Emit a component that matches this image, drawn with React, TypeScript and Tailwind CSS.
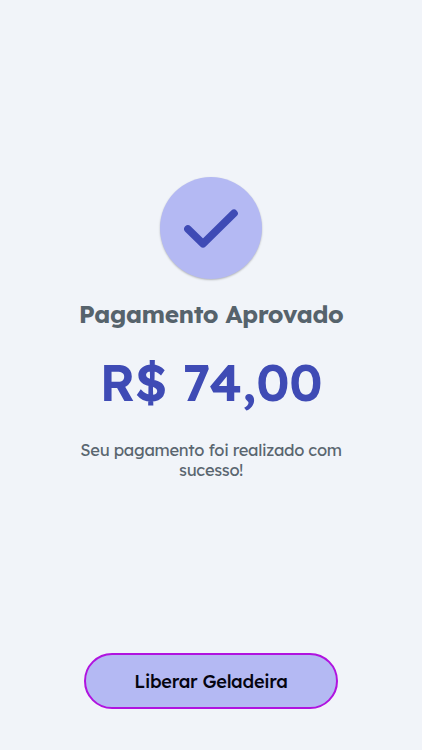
interface PaymentResultProps {
  amount: string;
  title: string;
}

const CheckBadge = () => (
  <div className="flex size-[102px] items-center justify-center rounded-full bg-[#b4b9f3] shadow-[0_1px_2px_rgba(0,0,0,0.25)]">
    <svg
      width="54"
      height="40"
      viewBox="0 0 54 40"
      fill="none"
      stroke="#3f4bb5"
      strokeWidth="7.6"
      strokeLinecap="round"
      strokeLinejoin="round"
    >
      <path d="M3.9 21 L19 35.8 L50 5.3" />
    </svg>
  </div>
);

const PaymentResult = ({ amount, title }: PaymentResultProps) => (
  <main className="flex flex-col items-center text-center">
    <CheckBadge />
    <h1 className="mt-5 text-[24.5px] leading-[30px] font-bold tracking-[-0.46px] whitespace-nowrap text-[#56636c]">
      {title}
    </h1>
    <p className="mt-[27px] text-[51px] leading-[52px] font-semibold tracking-[-0.15px] whitespace-nowrap text-[#3f4bb5]">
      {amount}
    </p>
    <p className="mt-8 text-[16.5px] leading-5 tracking-[-0.3px] text-[#5a6670]">
      Seu pagamento foi realizado com
      <br />
      sucesso!
    </p>
  </main>
);

export default function App() {
  return (
    <div className="flex h-screen flex-col items-center justify-between bg-[#f1f4f9] pt-[177px] pb-[41px] font-['Lexend','Inter',sans-serif]">
      <PaymentResult title="Pagamento Aprovado" amount="R$ 74,00" />
      <button
        type="button"
        className="h-14 w-[254px] rounded-full border-2 border-[#b013df] bg-[#b4b9f3] pt-px text-[18.2px] font-medium tracking-[-0.28px] text-[#050510]"
      >
        Liberar Geladeira
      </button>
    </div>
  );
}
